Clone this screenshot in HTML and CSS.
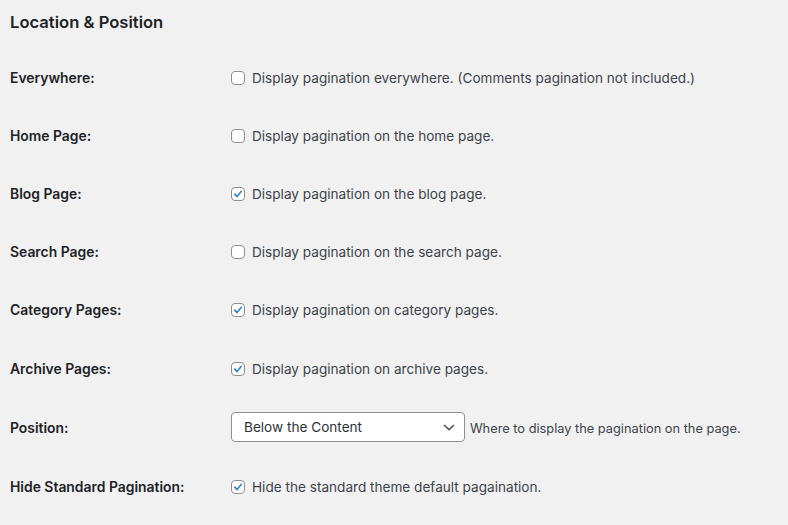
FILE: index.html
```html
<!DOCTYPE html>
<html>
<head>
<meta charset="utf-8">
<link rel="stylesheet" href="styles.css">
</head>
<body>
<div class="wrap">
  <h2 class="title">Location &amp; Position</h2>
  <div class="form">
    <div class="row">
      <div class="th">Everywhere:</div>
      <label class="td"><span class="cb"></span>Display pagination everywhere. (Comments pagination not included.)</label>
    </div>
    <div class="row">
      <div class="th">Home Page:</div>
      <label class="td"><span class="cb"></span>Display pagination on the home page.</label>
    </div>
    <div class="row">
      <div class="th">Blog Page:</div>
      <label class="td"><span class="cb checked"><svg viewBox="0 0 14 14" width="14" height="14"><path d="M3.2 7.2 L5.9 10 L10.9 3.9" fill="none" stroke="#3582c4" stroke-width="1.9" stroke-linecap="round" stroke-linejoin="round"/></svg></span>Display pagination on the blog page.</label>
    </div>
    <div class="row">
      <div class="th">Search Page:</div>
      <label class="td"><span class="cb"></span>Display pagination on the search page.</label>
    </div>
    <div class="row">
      <div class="th">Category Pages:</div>
      <label class="td"><span class="cb checked"><svg viewBox="0 0 14 14" width="14" height="14"><path d="M3.2 7.2 L5.9 10 L10.9 3.9" fill="none" stroke="#3582c4" stroke-width="1.9" stroke-linecap="round" stroke-linejoin="round"/></svg></span>Display pagination on category pages.</label>
    </div>
    <div class="row row-tall">
      <div class="th">Archive Pages:</div>
      <label class="td"><span class="cb checked"><svg viewBox="0 0 14 14" width="14" height="14"><path d="M3.2 7.2 L5.9 10 L10.9 3.9" fill="none" stroke="#3582c4" stroke-width="1.9" stroke-linecap="round" stroke-linejoin="round"/></svg></span>Display pagination on archive pages.</label>
    </div>
    <div class="row row-select">
      <div class="th">Position:</div>
      <div class="td">
        <div class="select"><span>Below the Content</span><svg viewBox="0 0 12 7" width="12" height="7"><path d="M1 1 L6 5.6 L11 1" fill="none" stroke="#50575e" stroke-width="1.6"/></svg></div>
        <span class="desc">Where to display the pagination on the page.</span>
      </div>
    </div>
    <div class="row">
      <div class="th">Hide Standard Pagination:</div>
      <label class="td"><span class="cb checked"><svg viewBox="0 0 14 14" width="14" height="14"><path d="M3.2 7.2 L5.9 10 L10.9 3.9" fill="none" stroke="#3582c4" stroke-width="1.9" stroke-linecap="round" stroke-linejoin="round"/></svg></span>Hide the standard theme default pagaination.</label>
    </div>
  </div>
</div>
</body>
</html>
```
FILE: styles.css
```css
html, body {
  margin: 0;
  padding: 0;
  background: #f1f1f1;
}
body {
  font-family: Inter, "Liberation Sans", sans-serif;
  color: #1d2327;
}
.wrap {
  padding: 10px 10px 0 10px;
}
.title {
  margin: 0;
  font-size: 16.6px;
  line-height: 24px;
  font-weight: 600;
  color: #1d2327;
}
.form {
  margin-top: 15px;
}
.row {
  display: grid;
  grid-template-columns: 220px 1fr;
  align-items: center;
  height: 58px;
}
.row-tall {
  height: 59px;
}
.row-select {
  height: 60px;
}
.th {
  font-size: 13.9px;
  font-weight: 600;
  color: #1d2327;
}
.td {
  display: flex;
  align-items: center;
  font-size: 13.6px;
  color: #3c434a;
}
.cb {
  width: 14px;
  height: 14px;
  box-sizing: border-box;
  border: 1px solid #8c8f94;
  border-radius: 4px;
  background: #fff;
  margin: 0 7px 0 1px;
  display: flex;
  align-items: center;
  justify-content: center;
  flex: none;
}
.cb svg {
  display: block;
}
.select {
  width: 234px;
  height: 30px;
  box-sizing: border-box;
  margin-left: 1px;
  border: 1px solid #8c8f94;
  border-radius: 4px;
  background: #fff;
  display: flex;
  align-items: center;
  justify-content: space-between;
  padding: 0 9px 0 12px;
  color: #2c3338;
  font-size: 13.6px;
  margin-top: -2px;
}
.desc {
  margin-left: 5px;
  font-size: 12.8px;
  color: #3c434a;
}
```
